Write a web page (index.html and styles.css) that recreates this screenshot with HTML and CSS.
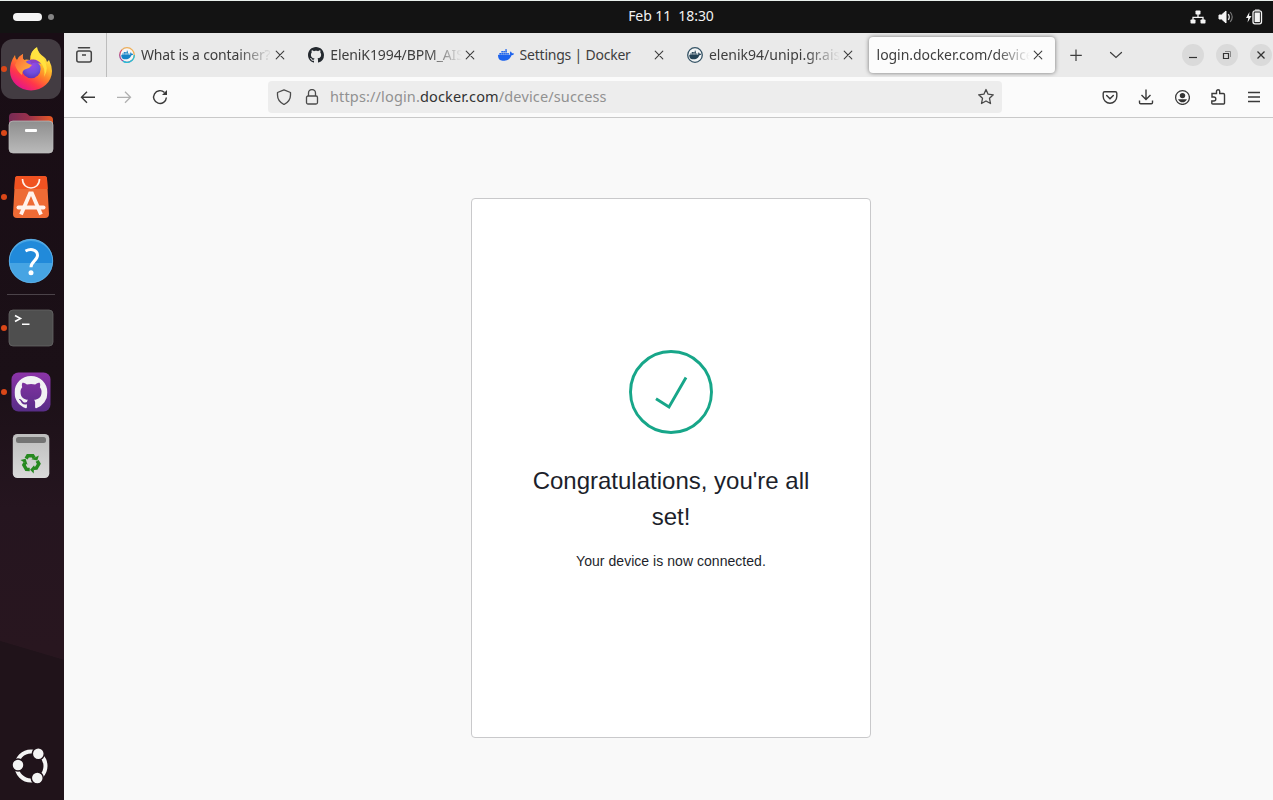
FILE: index.html
```html
<!DOCTYPE html>
<html lang="en">
<head>
<meta charset="utf-8">
<title>login.docker.com/device/success</title>
<link rel="stylesheet" href="styles.css">
</head>
<body>
<svg class="defs" width="0" height="0" aria-hidden="true">
  <symbol id="whale" viewBox="0 0 24 24"><path d="M13.983 11.078h2.119a.186.186 0 00.186-.185V9.006a.186.186 0 00-.186-.186h-2.119a.185.185 0 00-.185.185v1.888c0 .102.083.185.185.185m-2.954-5.43h2.118a.186.186 0 00.186-.186V3.574a.186.186 0 00-.186-.185h-2.118a.185.185 0 00-.185.185v1.888c0 .102.082.185.185.185m0 2.716h2.118a.187.187 0 00.186-.186V6.29a.186.186 0 00-.186-.185h-2.118a.185.185 0 00-.185.185v1.887c0 .102.082.185.185.186m-2.93 0h2.12a.186.186 0 00.184-.186V6.29a.185.185 0 00-.185-.185H8.1a.185.185 0 00-.185.185v1.887c0 .102.083.185.185.186m-2.964 0h2.119a.186.186 0 00.185-.186V6.29a.185.185 0 00-.185-.185H5.136a.186.186 0 00-.186.185v1.887c0 .102.084.185.186.186m5.893 2.715h2.118a.186.186 0 00.186-.185V9.006a.186.186 0 00-.186-.186h-2.118a.185.185 0 00-.185.185v1.888c0 .102.082.185.185.185m-2.93 0h2.12a.185.185 0 00.184-.185V9.006a.185.185 0 00-.184-.186h-2.12a.185.185 0 00-.184.185v1.888c0 .102.083.185.185.185m-2.964 0h2.119a.185.185 0 00.185-.185V9.006a.185.185 0 00-.184-.186h-2.12a.186.186 0 00-.186.186v1.887c0 .102.084.185.186.185m-2.92 0h2.12a.185.185 0 00.184-.185V9.006a.185.185 0 00-.184-.186h-2.12a.185.185 0 00-.184.185v1.888c0 .102.082.185.185.185M23.763 9.89c-.065-.051-.672-.51-1.954-.51-.338.001-.676.03-1.01.087-.248-1.7-1.653-2.53-1.716-2.566l-.344-.199-.226.327c-.284.438-.49.922-.612 1.43-.23.97-.09 1.882.403 2.661-.595.332-1.55.413-1.744.42H.751a.751.751 0 00-.75.748 11.376 11.376 0 00.692 4.062c.545 1.428 1.355 2.48 2.41 3.124 1.18.723 3.1 1.137 5.275 1.137.983.003 1.963-.086 2.93-.266a12.248 12.248 0 003.823-1.389c.98-.567 1.86-1.288 2.61-2.136 1.252-1.418 1.998-2.997 2.553-4.4h.221c1.372 0 2.215-.549 2.68-1.009.309-.293.55-.65.707-1.046l.098-.288Z"/></symbol>
  <symbol id="octocat" viewBox="0 0 16 16"><path d="M8 0C3.58 0 0 3.58 0 8c0 3.54 2.29 6.53 5.47 7.59.4.07.55-.17.55-.38 0-.19-.01-.82-.01-1.49-2.01.37-2.53-.49-2.69-.94-.09-.23-.48-.94-.82-1.13-.28-.15-.68-.52-.01-.53.63-.01 1.08.58 1.23.82.72 1.21 1.87.87 2.33.66.07-.52.28-.87.51-1.07-1.78-.2-3.64-.89-3.64-3.95 0-.87.31-1.59.82-2.15-.08-.2-.36-1.02.08-2.12 0 0 .67-.21 2.2.82.64-.18 1.32-.27 2-.27s1.36.09 2 .27c1.53-1.04 2.2-.82 2.2-.82.44 1.1.16 1.92.08 2.12.51.56.82 1.27.82 2.15 0 3.07-1.87 3.75-3.65 3.95.29.25.54.73.54 1.48 0 1.07-.01 1.93-.01 2.2 0 .21.15.46.55.38A8.01 8.01 0 0 0 16 8c0-4.42-3.58-8-8-8z"/></symbol>
  <symbol id="close" viewBox="0 0 16 16"><path d="M4.200 4.200l7.600 7.600M11.800 4.200l-7.600 7.600" fill="none" stroke="#3d3d3d" stroke-width="1.100" stroke-linecap="round"/></symbol>
</svg>

<header class="topbar">
  <div class="workspaces"><span class="ws-active"></span><span class="ws-dot"></span></div>
  <div class="clock"><span>Feb 11</span><span class="clock-time">18:30</span></div>
  <div class="status">
    <svg width="16" height="16" viewBox="0 0 16 16"><g fill="#f4f4f4"><rect x="5.500" y="1.500" width="5" height="4" rx=".8"/><rect x=".5" y="10.500" width="5" height="4" rx=".8"/><rect x="10.500" y="10.500" width="5" height="4" rx=".8"/></g><path d="M8 5v3M3 11V8.300h10V11" fill="none" stroke="#f4f4f4" stroke-width="1.300"/></svg>
    <svg width="16" height="16" viewBox="0 0 16 16"><path d="M1 6h2.500L8 2v12l-4.500-4H1z" fill="#f4f4f4" stroke="#f4f4f4" stroke-linejoin="round"/><path d="M10.300 5q2 3 0 6" fill="none" stroke="#ddd" stroke-width="1.300"/><path d="M12.200 3q4 5 0 10" fill="none" stroke="#777" stroke-width="1.200"/></svg>
    <svg width="17" height="16" viewBox="0 0 17 16"><path d="M3.500 3L0 9h2.300l-.8 4.500L5.500 7H3z" fill="#f4f4f4"/><rect x="7" y="1.800" width="8.500" height="13" rx="2" fill="none" stroke="#f4f4f4" stroke-width="1.300"/><rect x="8.600" y="3.500" width="5.300" height="9.600" fill="#f4f4f4"/><path d="M9 1h4.500" stroke="#f4f4f4"/></svg>
  </div>
</header>

<div class="desktop">
  <nav class="dock">
    <div class="slot running">
      <div class="tile">
        <svg width="44" height="46" viewBox="0 0 44 46">
          <defs>
            <linearGradient id="fx" x1=".82" y1=".1" x2=".25" y2=".95"><stop offset="0" stop-color="#fff44f"/><stop offset=".28" stop-color="#ffc02c"/><stop offset=".52" stop-color="#ff7b2b"/><stop offset=".75" stop-color="#ff364a"/><stop offset="1" stop-color="#e5158b"/></linearGradient>
            <radialGradient id="fg" cx=".55" cy=".3" r=".75"><stop offset="0" stop-color="#9a48e6"/><stop offset=".55" stop-color="#704fdc"/><stop offset="1" stop-color="#5a2fb4"/></radialGradient>
            <linearGradient id="fh" x1="0" y1="0" x2="1" y2="1"><stop offset="0" stop-color="#ff6138"/><stop offset="1" stop-color="#ffbd3c"/></linearGradient>
          </defs>
          <path d="M1 25Q1 16 6 9Q6 12 8 14Q10 10 14 8Q13 12 15 14Q17 13 21 14Q21 5 28 1Q29 7 35 11Q38 13 38 16L40 14Q43 20 43 25A21 19.500 0 0 1 1 25Z" fill="url(#fx)"/>
          <path d="M27 2Q28 8 34 12Q41 22 35 31Q37 22 31 16Q24 13 22 13Q21 6 27 2Z" fill="#ffe642" opacity=".85"/>
          <circle cx="22.300" cy="23" r="9.300" fill="url(#fg)"/>
          <path d="M21 14Q28 12 32 18Q26 15 22 18Z" fill="#8a3fc4"/>
          <path d="M8 15Q10 10 14 8Q13 12 15 14Q18 18 23 19Q21 22 17 23Q13 24 13 29Q8 25 6 19Z" fill="url(#fh)"/>
        </svg>
      </div>
    </div>
    <div class="slot running">
      <svg width="46" height="42" viewBox="0 0 46 42">
        <defs><linearGradient id="fo" x2="1"><stop stop-color="#762b55"/><stop offset=".45" stop-color="#99304b"/><stop offset="1" stop-color="#e85a24"/></linearGradient><linearGradient id="ff" x2="0" y2="1"><stop stop-color="#8e8e8e"/><stop offset="1" stop-color="#bababa"/></linearGradient></defs>
        <path d="M1 5q0-4 4-4h12q2 0 3 1.500t3 1.500h18q4 0 4 4v10H1z" fill="url(#fo)"/><rect x="1" y="9" width="44" height="32" rx="4" fill="url(#ff)" stroke="#bebebe" stroke-width=".7"/><rect x="17" y="17" width="12" height="3" rx="1" fill="#fff"/>
      </svg>
    </div>
    <div class="slot running">
      <svg width="38" height="44" viewBox="0 0 38 44">
        <path d="M6 1h26q3 0 3 3l2 35q0 4-4 4H5q-4 0-4-4L3 4q0-3 3-3z" fill="#ee6b35"/><path d="M6 1h26q3 0 3 3l.7 10H2.400L3 4q0-3 3-3z" fill="#f05221"/>
        <g fill="none" stroke="#fff2ec"><path d="M10.500 4c0 12 17 12 17 0" stroke-width="1.600"/><path d="M9 39.500L18 18.500h2L29 39.500" stroke-width="3.800"/><path d="M6.500 32.500h25" stroke-width="4" stroke-linecap="round"/></g>
      </svg>
    </div>
    <div class="slot">
      <svg width="46" height="46" viewBox="0 0 46 46"><circle cx="23" cy="23" r="22" fill="#46a4e3"/><path d="M1 25a22 22 0 1 1 44 0z" fill="#218ada"/><circle cx="23" cy="23" r="21.700" fill="none" stroke="#62b2ea" stroke-width=".8"/><path d="M17.500 13q4-2 7-1.300 5 1.200 5 5.500c0 5-6.500 6.500-6.500 12" fill="none" stroke="#fff" stroke-width="3"/><circle cx="23" cy="34.800" r="2.500" fill="#fff"/></svg>
    </div>
    <div class="dock-rule"></div>
    <div class="slot running">
      <svg width="46" height="38" viewBox="0 0 46 38"><rect x="1" y="1" width="44" height="36" rx="4" fill="#4e4e4e" stroke="#666" stroke-width=".8"/><path d="M7 6.500l5.500 3L7 12.500M14 15.300h7.500" fill="none" stroke="#fff" stroke-width="1.600"/></svg>
    </div>
    <div class="slot running">
      <svg width="40" height="40" viewBox="0 0 40 40"><defs><linearGradient id="gh" x2="0" y2="1"><stop stop-color="#8c34a8"/><stop offset="1" stop-color="#572d87"/></linearGradient></defs><rect x=".5" y=".5" width="39" height="39" rx="7" fill="url(#gh)"/><use href="#octocat" x="3.500" y="4" width="33" height="33" fill="#f2f2f4"/></svg>
    </div>
    <div class="slot">
      <svg width="38" height="46" viewBox="0 0 38 46">
        <defs>
          <linearGradient id="tr" x2="0" y2="1"><stop stop-color="#bdbdbd"/><stop offset="1" stop-color="#dadada"/></linearGradient>
          <g id="arrow"><path d="M-4.900-4.300L-3.200-7.200H1.800L3.200-5" fill="none" stroke="#26891f" stroke-width="3.500"/><path d="M.3-3.800L6.300-2.600 7.800-7.600z" fill="#26891f"/></g>
        </defs>
        <rect x=".8" y="1" width="36.500" height="44" rx="4.500" fill="url(#tr)"/><rect x="4" y="4" width="30" height="6" rx="2.500" fill="#747474"/>
        <g transform="translate(19 30)"><use href="#arrow"/><use href="#arrow" transform="rotate(120)"/><use href="#arrow" transform="rotate(240)"/></g>
      </svg>
    </div>
    <div class="apps">
      <svg width="36" height="36" viewBox="0 0 36 36"><circle cx="19" cy="18" r="14.500" fill="none" stroke="#f4f4f4" stroke-width="4"/><g fill="#f4f4f4" stroke="#20131a" stroke-width="1.500"><circle cx="6" cy="17" r="6"/><circle cx="26.300" cy="5.700" r="6"/><circle cx="25.300" cy="30" r="6"/></g></svg>
    </div>
  </nav>

  <main class="browser">
    <div class="tabbar">
      <div class="history"><svg width="18" height="18" viewBox="0 0 18 18"><path d="M3.500 1.800h11" stroke="#444" stroke-width="1.500" stroke-linecap="round"/><rect x="1.800" y="5" width="14.500" height="11" rx="2" fill="none" stroke="#444" stroke-width="1.500"/><path d="M7 9h4" stroke="#444" stroke-width="1.500"/></svg></div>
      <div class="tabs">
        <div class="tab">
          <svg class="favicon" width="16" height="16" viewBox="0 0 16 16"><defs><linearGradient id="rg" x1="0" y1="1" x2="1" y2="0"><stop stop-color="#7542b4"/><stop offset=".48" stop-color="#ed5258"/><stop offset=".52" stop-color="#e7ac65"/><stop offset="1" stop-color="#f5b04d"/></linearGradient></defs><circle cx="8" cy="8" r="7.300" fill="#f6f6f6" stroke="url(#rg)" stroke-width="1.300"/><path d="M15.300 8A7.300 7.300 0 0 1 4 14.100" fill="none" stroke="#25bfd8" stroke-width="1.300"/><use href="#whale" x="2" y="2" width="12.500" height="12" fill="#1683c6"/></svg>
          <span class="tab-title fade t1">What is a container?</span><svg class="x" width="16" height="16"><use href="#close"/></svg>
        </div>
        <div class="tab">
          <svg class="favicon" width="16" height="16"><use href="#octocat" fill="#24292f"/></svg>
          <span class="tab-title fade t2">EleniK1994/BPM_AIS</span><svg class="x" width="16" height="16"><use href="#close"/></svg>
        </div>
        <div class="tab">
          <svg class="favicon" width="16" height="16"><use href="#whale" fill="#1d63ed"/></svg>
          <span class="tab-title t3">Settings | Docker</span><svg class="x" width="16" height="16"><use href="#close"/></svg>
        </div>
        <div class="tab">
          <svg class="favicon" width="16" height="16" viewBox="0 0 16 16"><circle cx="8" cy="8" r="7.300" fill="#f2f4f5" stroke="#365466" stroke-width="1.300"/><use href="#whale" x="2" y="2" width="12.500" height="12" fill="#254356"/></svg>
          <span class="tab-title fade t4">elenik94/unipi.gr.ais</span><svg class="x" width="16" height="16"><use href="#close"/></svg>
        </div>
        <div class="tab active">
          <span class="tab-title fade t5">login.docker.com/device</span><svg class="x" width="16" height="16"><use href="#close"/></svg>
        </div>
      </div>
      <svg class="newtab" width="16" height="16" viewBox="0 0 16 16"><path d="M8 2.500v11.500M2.300 8.300h11.500" stroke="#3d3d3d" stroke-width="1.200"/></svg>
      <svg class="alltabs" width="16" height="16" viewBox="0 0 16 16"><path d="M2.500 5.500L8 10.500l5.500-5" fill="none" stroke="#3d3d3d" stroke-width="1.200" stroke-linecap="round"/></svg>
      <div class="winbtns">
        <span class="winbtn"><svg width="10" height="10" viewBox="0 0 10 10"><path d="M1 7.500h8" stroke="#333" stroke-width="1.200"/></svg></span>
        <span class="winbtn"><svg width="10" height="10" viewBox="0 0 10 10"><path d="M1.500 3.500h5v5h-5z" fill="none" stroke="#333" stroke-width="1.200"/><path d="M3 1.500h5.500V7" fill="none" stroke="#888"/></svg></span>
        <span class="winbtn"><svg width="10" height="10" viewBox="0 0 10 10"><path d="M1.500 1.500l7 7M8.500 1.500l-7 7" stroke="#333" stroke-width="1.300"/></svg></span>
      </div>
    </div>

    <div class="navbar">
      <div class="navbtns">
        <svg width="16" height="16" viewBox="0 0 16 16"><path d="M15 8.300H1.500M7 2.800L1.500 8.300 7 13.800" fill="none" stroke="#3a3a3a" stroke-width="1.400"/></svg>
        <svg width="16" height="16" viewBox="0 0 16 16"><path d="M1 8.300h13.500M9 2.800l5.500 5.500L9 13.800" fill="none" stroke="#b0b0b0" stroke-width="1.300"/></svg>
        <svg width="16" height="16" viewBox="0 0 16 16"><path d="M12.500 3.500A6.400 6.400 0 1 0 14.400 8.500" fill="none" stroke="#3a3a3a" stroke-width="1.400"/><path d="M15 1v5h-5z" fill="#3a3a3a"/></svg>
      </div>
      <div class="urlbar">
        <svg width="16" height="16" viewBox="0 0 16 16"><path d="M8 .8L14.500 3.500V6c0 4-2.500 7.500-6.500 9.500C4 13.500 1.500 10 1.500 6V3.500z" fill="none" stroke="#4b4b4b" stroke-width="1.300" stroke-linejoin="round"/></svg>
        <svg width="16" height="16" viewBox="0 0 16 16"><path d="M4.500 7V4a3.500 3.500 0 0 1 7 0v3" fill="none" stroke="#4b4b4b" stroke-width="1.300"/><rect x="2.500" y="7" width="11" height="8" rx="1.500" fill="none" stroke="#4b4b4b" stroke-width="1.300"/></svg>
        <span class="url">https://login.<b>docker.com</b>/device/success</span>
        <svg class="star" width="18" height="18" viewBox="0 0 18 18"><path d="M9 1.500l2.100 4.700 5.200.6-3.800 3.500 1 5.200L9 13l-4.500 2.500 1-5.200L1.700 6.800l5.200-.6z" fill="none" stroke="#484848" stroke-width="1.300" stroke-linejoin="round"/></svg>
      </div>
      <div class="tools">
        <svg width="16" height="16" viewBox="0 0 16 16"><path d="M2.700 2.700h10.600q1.500 0 1.500 1.500V7.500a6.800 6.800 0 0 1-13.600 0V4.200q0-1.500 1.500-1.500z" fill="none" stroke="#3a3a3a" stroke-width="1.400"/><path d="M4.700 6.500L8 9.700l3.300-3.200" fill="none" stroke="#3a3a3a" stroke-width="1.500" stroke-linecap="round"/></svg>
        <svg width="16" height="16" viewBox="0 0 16 16"><path d="M8 .5v10M3.500 6L8 10.500 12.500 6M1.500 11.500v2q0 1.200 1.200 1.200h10.600q1.200 0 1.200-1.200v-2" fill="none" stroke="#3a3a3a" stroke-width="1.400"/></svg>
        <svg width="16" height="16" viewBox="0 0 16 16"><circle cx="8.500" cy="8.500" r="6.900" fill="none" stroke="#3a3a3a" stroke-width="1.300"/><circle cx="8.500" cy="6.600" r="2.700" fill="#333"/><path d="M4 10.200h9q-1.500 3.100-4.500 3.100T4 10.200z" fill="#333"/></svg>
        <svg width="16" height="16" viewBox="0 0 16 16"><path d="M2 8V4.500h4.500V2.300a1.600 1.600 0 0 1 3.200 0v2.200h3.600q1.200 0 1.200 1.200v8.600q0 .7-.8.700H2.700q-.9 0-.9-.9V12h2a2 2 0 0 0 0-4z" fill="none" stroke="#3a3a3a" stroke-width="1.400"/></svg>
        <svg width="16" height="16" viewBox="0 0 16 16"><path d="M2 3.500h12M2 8h12M2 12.500h12" stroke="#3a3a3a" stroke-width="1.300"/></svg>
      </div>
    </div>

    <section class="page">
      <div class="card">
        <svg width="84" height="84" viewBox="0 0 84 84"><circle cx="42" cy="42" r="40.500" fill="none" stroke="#17a689" stroke-width="2.900"/><path d="M27 48.800L40 57 57 27.500" fill="none" stroke="#17a689" stroke-width="2.900"/></svg>
        <h1>Congratulations, you're all set!</h1>
        <p>Your device is now connected.</p>
      </div>
    </section>
  </main>
</div>
</body>
</html>
```
FILE: styles.css
```css
* { box-sizing: border-box; }
body { margin: 0; width: 1273px; height: 800px; overflow: hidden; display: flex; flex-direction: column; font-family: "Noto Sans", "Open Sans", sans-serif; }
svg { display: block; flex: none; }
.defs { position: absolute; }

.topbar { height: 33px; flex: none; background: #131313; border-top: 1px solid #e9f0ec; display: grid; grid-template-columns: 1fr auto 1fr; align-items: center; color: #f2f2f2; }
.workspaces { display: flex; align-items: center; gap: 6px; padding-left: 13px; }
.ws-active { width: 29px; height: 8px; border-radius: 4px; background: #f4f4f4; }
.ws-dot { width: 6px; height: 6px; border-radius: 50%; background: #858585; }
.clock { display: flex; gap: 7px; font-size: 14px; line-height: 20px; padding-left: 69px; margin-top: -2px; letter-spacing: -.05px; }
.status { display: flex; justify-content: flex-end; align-items: center; gap: 12px; padding: 0 10px 1px 0; }

.desktop { flex: 1; display: flex; min-height: 0; }
.dock { width: 64px; flex: none; padding-top: 4px; display: flex; flex-direction: column; background: linear-gradient(16.5deg, #20131a 0 20.200%, transparent 20.300%), linear-gradient(#190d15 0, #1b1017 45%, #25151f 62%, #28161f 80%); }
.slot { height: 64px; width: 62px; display: flex; align-items: center; justify-content: center; position: relative; }
.running::before { content: ""; position: absolute; left: 1px; top: 29px; width: 6px; height: 6px; border-radius: 50%; background: #da4718; z-index: 1; }
.tile { width: 60px; height: 60px; border-radius: 12px; background: #433c42; display: flex; align-items: center; justify-content: center; }
.dock-rule { height: 1px; width: 48px; margin: 1px 0 1px 7px; background: #4b4349; }
.apps { margin: auto 0 16px 12px; }

.browser { flex: 1; min-width: 0; display: flex; flex-direction: column; }
.tabbar { height: 44px; flex: none; background: #eaeaea; display: flex; align-items: center; }
.history { width: 43px; height: 44px; border-right: 1px solid #bdbdbd; display: flex; align-items: center; padding-left: 11px; }
.tabs { display: flex; padding-left: 3px; align-items: center; }
.tab { width: 189.300px; height: 36px; display: flex; align-items: center; padding: 0 11px 0 9px; }
.favicon { margin-right: 6px; }
.tab-title { flex: 1; min-width: 0; overflow: hidden; white-space: nowrap; font-size: 14px; line-height: 22px; color: #3e3e3e; margin-top: -1px; }
.t1 { letter-spacing: -.15px; }
.t2 { letter-spacing: -.1px; }
.t3 { letter-spacing: -.22px; }
.t4 { letter-spacing: 0; }
.t5 { letter-spacing: -.05px; }
.fade { -webkit-mask-image: linear-gradient(to left, transparent, #000 34px); mask-image: linear-gradient(to left, transparent, #000 34px); }
.active { width: 186px; margin-left: 1.400px; background: #fcfcfc; border-radius: 4px; box-shadow: 0 0 4px rgba(0,0,0,.5); padding: 0 8.500px 0 8px; }
.newtab { margin-left: 13.400px; }
.alltabs { margin-left: 24.200px; }
.winbtns { display: flex; gap: 12px; margin-left: 58px; }
.winbtn { width: 22px; height: 22px; border-radius: 50%; background: #dadada; display: flex; align-items: center; justify-content: center; }

.navbar { height: 41px; flex: none; background: #fbfbfb; border-bottom: 1px solid #c9c9c9; display: flex; align-items: center; }
.navbtns { display: flex; gap: 20px; padding-left: 16px; }
.urlbar { width: 734px; height: 32px; margin-left: 100px; border-radius: 4px; background: #ededed; display: flex; align-items: center; padding: 0 7px 0 8px; gap: 12px; }
.url { margin-left: -2px; font-size: 14.500px; line-height: 22px; color: #919191; letter-spacing: .14px; margin-top: -3px; }
.url b { font-weight: 400; color: #333; }
.star { margin-left: auto; }
.tools { display: flex; gap: 20px; margin-left: 100px; }

.page { flex: 1; background: #f9f9f9; padding: 80px 0 0 407px; }
.card { width: 400px; height: 540px; background: #fff; border: 1px solid #c9c9cb; border-radius: 4px; padding: 151px 40px 0; display: flex; flex-direction: column; align-items: center; text-align: center; font-family: "Liberation Sans", Arial, sans-serif; color: #1d1f2b; }
.card h1 { font-size: 24px; line-height: 36px; font-weight: 400; margin: 29px 0 0; }
.card p { font-size: 14px; line-height: 21px; margin: 16px 0 0; letter-spacing: .04px; }
```
